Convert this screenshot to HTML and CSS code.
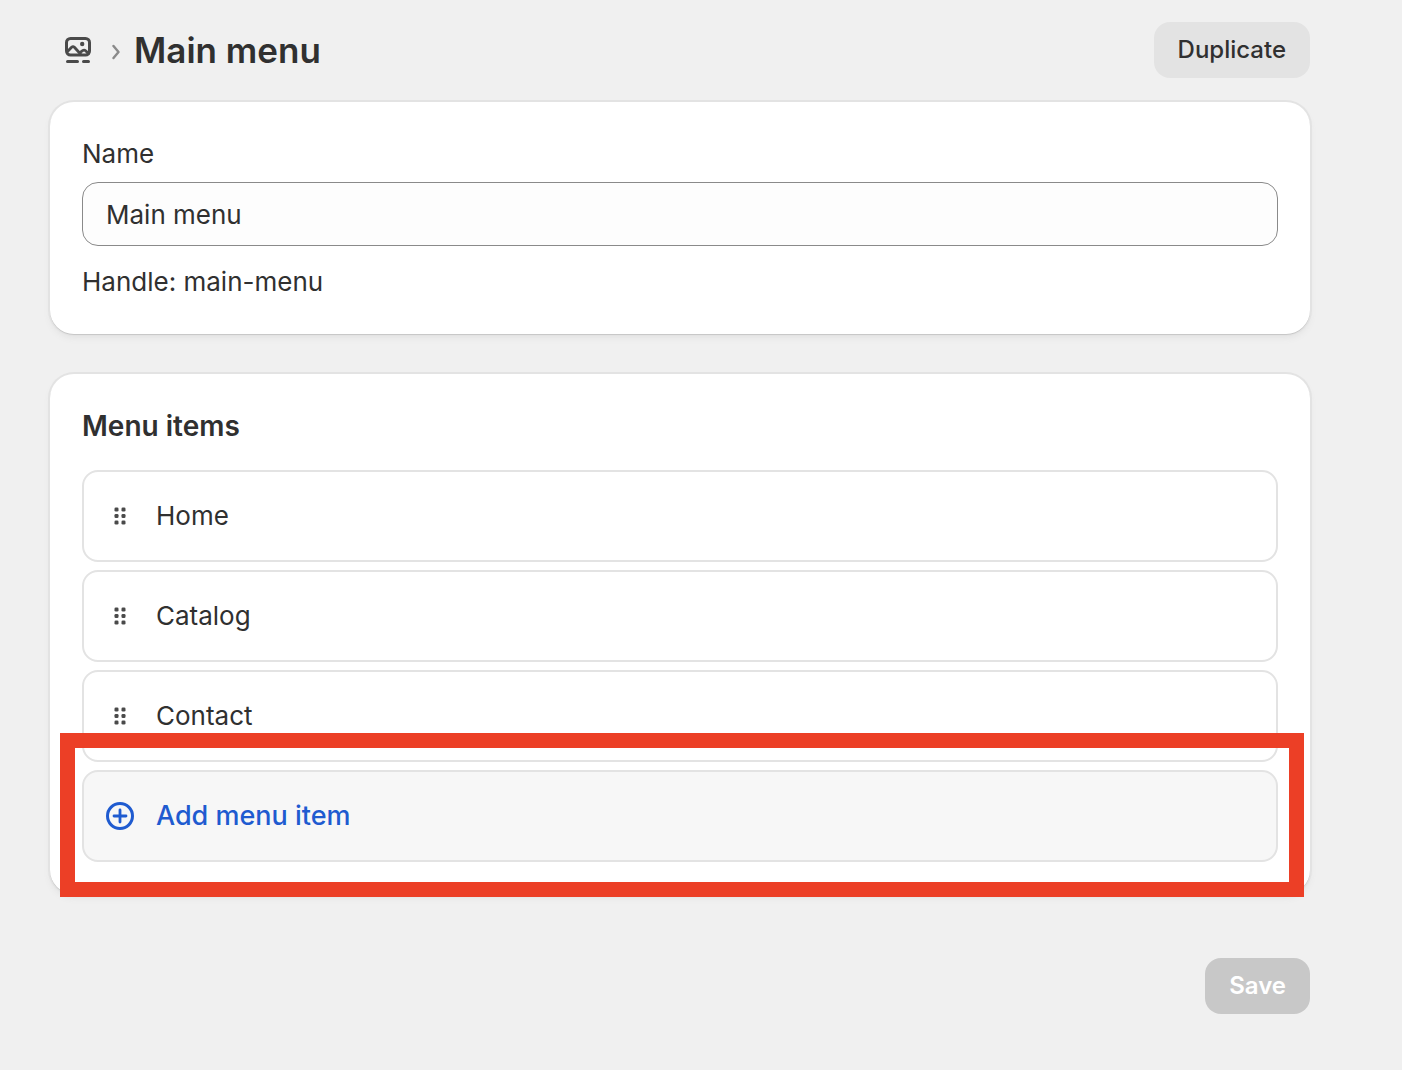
FILE: index.html
```html
<!DOCTYPE html>
<html lang="en">
<head>
<meta charset="utf-8">
<meta name="viewport" content="width=device-width, initial-scale=1">
<title>Main menu</title>
<link rel="stylesheet" href="styles.css">
</head>
<body>
<main class="page">
  <header class="page-header">
    <nav class="breadcrumb" aria-label="Breadcrumb">
      <a class="crumb" href="#" aria-label="Content">
        <svg class="crumb-icon" viewBox="0 0 28 28" fill="none" stroke="#4a4a4a" stroke-width="3" stroke-linecap="round" stroke-linejoin="round">
          <rect x="2.500" y="2.500" width="23" height="16.500" rx="4"/>
          <path d="M3.500 15.500 7.600 11.300Q9 10 10.400 11.300L16.500 18M15.500 16.800 18.600 14.700Q20.200 13.600 21.600 14.800L24.500 17.500" stroke-width="2.800"/>
          <circle cx="18.200" cy="8" r="2.200" fill="#4a4a4a" stroke="none"/>
          <path d="M3.500 25.600H13.500M19.500 25.600H24.500" stroke-width="3"/>
        </svg>
      </a>
      <svg class="chevron" viewBox="0 0 8 16" fill="none" stroke="#8a8a8a" stroke-width="2.400" stroke-linecap="round" stroke-linejoin="round"><path d="M1.500 2 6.500 8 1.500 14"/></svg>
      <h1 class="page-title">Main menu</h1>
    </nav>
    <button class="button button-secondary" type="button">Duplicate</button>
  </header>

  <section class="card">
    <label class="field-label" for="menu-name">Name</label>
    <input class="field-input" id="menu-name" type="text" value="Main menu">
    <p class="field-help">Handle: main-menu</p>
  </section>

  <section class="card">
    <h2 class="card-title">Menu items</h2>
    <ul class="items">
      <li class="item"><svg class="item-icon" viewBox="0 0 28 28" fill="#4a4a4a"><use href="#grip"/></svg>Home</li>
      <li class="item"><svg class="item-icon" viewBox="0 0 28 28" fill="#4a4a4a"><use href="#grip"/></svg>Catalog</li>
      <li class="item"><svg class="item-icon" viewBox="0 0 28 28" fill="#4a4a4a"><use href="#grip"/></svg>Contact</li>
    </ul>
    <div class="add-row">
      <button class="item item-add" type="button">
        <svg class="item-icon" viewBox="0 0 28 28" fill="none" stroke="#1f5bd0" stroke-width="3" stroke-linecap="round"><circle cx="14" cy="14" r="12.500"/><path d="M14 8V20M8 14H20" stroke-width="2.800"/></svg>
        Add menu item
      </button>
      <div class="highlight" aria-hidden="true"></div>
    </div>
  </section>

  <footer class="page-footer">
    <button class="button button-primary" type="submit" disabled>Save</button>
  </footer>
</main>
<svg class="symbols" aria-hidden="true">
  <symbol id="grip" viewBox="0 0 28 28">
    <rect x="8.500" y="5.500" width="4" height="4" rx="1.300"/><rect x="15.500" y="5.500" width="4" height="4" rx="1.300"/>
    <rect x="8.500" y="12" width="4" height="4" rx="1.300"/><rect x="15.500" y="12" width="4" height="4" rx="1.300"/>
    <rect x="8.500" y="18.500" width="4" height="4" rx="1.300"/><rect x="15.500" y="18.500" width="4" height="4" rx="1.300"/>
  </symbol>
</svg>
</body>
</html>
```
FILE: styles.css
```css
*, *::before, *::after { box-sizing: border-box; }

body {
  margin: 0;
  background: #f0f0f0;
  color: #303030;
  font-family: Inter, "Liberation Sans", sans-serif;
  font-size: 26px;
  line-height: 40px;
}

h1, h2, p, ul { margin: 0; padding: 0; }
button, input { font: inherit; color: inherit; }

.page { padding: 22px 92px 56px 50px; }

.page-header {
  display: flex;
  align-items: center;
  justify-content: space-between;
  margin-bottom: 24px;
}

.breadcrumb {
  display: flex;
  align-items: center;
  padding-left: 14px;
}

.crumb { display: flex; }
.crumb-icon { width: 28px; height: 28px; }
.chevron { width: 8px; height: 16px; margin: 4px 14px 0 20px; }

.page-title {
  font-size: 35px;
  font-weight: 600;
  line-height: 48px;
}

.button {
  height: 56px;
  padding: 0 24px;
  border: 0;
  border-radius: 16px;
  font-size: 24px;
  line-height: 32px;
}

.button-secondary { background: #e3e3e3; font-weight: 550; }
.button-primary { background: #c8c8c8; color: #fff; font-weight: 600; }

.card {
  padding: 32px;
  border-radius: 24px;
  background: #fff;
  box-shadow: 0 1px 0 #c8c8c8, 0 0 0 2px #e3e3e3, 0 4px 6px #e3e3e3;
}

.card + .card { margin-top: 40px; }

.field-label { display: block; margin-bottom: 8px; }

.field-input {
  display: block;
  width: 100%;
  height: 64px;
  padding: 0 23px;
  border: 1px solid #8a8a8a;
  border-radius: 16px;
  background: #fdfdfd;
}

.field-help { margin-top: 16px; }

.card-title {
  margin-bottom: 24px;
  font-size: 28px;
  font-weight: 600;
}

.items {
  display: grid;
  gap: 8px;
  list-style: none;
}

.item {
  display: flex;
  align-items: center;
  gap: 22px;
  width: 100%;
  height: 92px;
  padding: 0 22px;
  border: 2px solid #e3e3e3;
  border-radius: 16px;
}

.item-icon { flex: none; width: 28px; height: 28px; }

.add-row { position: relative; margin-top: 8px; }

.item-add {
  background: #f7f7f7;
  color: #1f5bd0;
  font-size: 27px;
  font-weight: 500;
}

.highlight {
  position: absolute;
  inset: -37px -26px -35px -22px;
  border: 15px solid #ec3f26;
  pointer-events: none;
}

.page-footer {
  display: flex;
  justify-content: flex-end;
  margin-top: 64px;
}

.symbols { position: absolute; width: 0; height: 0; }
```
